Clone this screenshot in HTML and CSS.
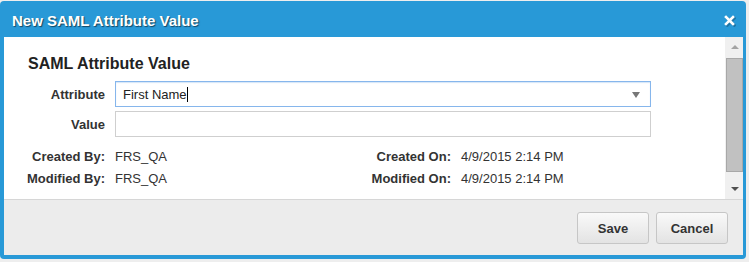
FILE: index.html
```html
<!DOCTYPE html>
<html>
<head>
<meta charset="utf-8">
<link rel="stylesheet" href="styles.css">
</head>
<body>
<div class="dialog">
  <div class="titlebar">
    <span class="title">New SAML Attribute Value</span>
    <span class="close" aria-label="Close">
      <svg width="12" height="12" viewBox="0 0 12 12">
        <path d="M2.5 2.5 L9.5 9.5 M9.5 2.5 L2.5 9.5" stroke="#1a5f88" stroke-width="3" stroke-linecap="square" transform="translate(0.8 0.8)" opacity="0.6"/>
        <path d="M2 2 L9 9 M9 2 L2 9" stroke="#fff" stroke-width="2.6" stroke-linecap="square"/>
      </svg>
    </span>
  </div>
  <div class="panel">
    <div class="body">
      <div class="content">
        <h2 class="heading">SAML Attribute Value</h2>
        <div class="form">
          <label class="label">Attribute</label>
          <div class="input select">
            <span class="text">First Name</span><span class="caret"></span>
            <span class="arrow"></span>
          </div>
          <label class="label">Value</label>
          <div class="input"></div>
        </div>
        <div class="meta">
          <span class="mlabel">Created By:</span>
          <span class="mvalue">FRS_QA</span>
          <span class="mlabel">Created On:</span>
          <span class="mvalue">4/9/2015 2:14 PM</span>
          <span class="mlabel">Modified By:</span>
          <span class="mvalue">FRS_QA</span>
          <span class="mlabel">Modified On:</span>
          <span class="mvalue">4/9/2015 2:14 PM</span>
        </div>
      </div>
      <div class="scrollbar">
        <div class="sb-btn"><span class="sb-up"></span></div>
        <div class="sb-track"><div class="sb-thumb"></div></div>
        <div class="sb-btn"><span class="sb-down"></span></div>
      </div>
    </div>
    <div class="footer">
      <button class="btn">Save</button>
      <button class="btn">Cancel</button>
    </div>
  </div>
</div>
</body>
</html>
```

FILE: styles.css
```css
* { box-sizing: border-box; }
html, body { margin: 0; padding: 0; }
body {
  background: #eeeeee;
  padding-top: 1px;
  font-family: "Liberation Sans", Arial, sans-serif;
  color: #333;
}
.dialog {
  width: 746px;
  height: 258px;
  background: #2899d7;
  border-radius: 4px;
  padding: 0 3px 4px 4px;
  display: flex;
  flex-direction: column;
}
.titlebar {
  height: 36px;
  flex: none;
  display: flex;
  align-items: flex-start;
  justify-content: space-between;
  padding: 10px 7px 0 8px;
}
.title {
  color: #fff;
  font-weight: bold;
  font-size: 15px;
  line-height: 20px;
  text-shadow: 1px 1px 1px rgba(0,0,0,0.55);
}
.close {
  display: flex;
  margin-top: 4px;
}
.panel {
  flex: 1;
  display: flex;
  flex-direction: column;
  background: #fff;
}
.body {
  height: 162px;
  display: flex;
}
.content {
  flex: 1;
  padding: 17px 0 0 22px;
}
.heading {
  margin: 0 0 0 2px;
  font-size: 16px;
  line-height: 20px;
  font-weight: bold;
  color: #222;
}
.form {
  margin-top: 7px;
  display: grid;
  grid-template-columns: 79px 536px;
  column-gap: 10px;
  row-gap: 4px;
  align-items: center;
}
.label, .mlabel {
  text-align: right;
  font-weight: bold;
  font-size: 13px;
  color: #333;
  white-space: nowrap;
}
.input {
  height: 26px;
  border: 1px solid #cfcfcf;
  background: #fff;
  display: flex;
  align-items: center;
  padding-left: 7px;
  font-size: 13px;
  color: #222;
}
.select {
  border-color: #86b6ec;
  box-shadow: inset 0 1px 1px rgba(134,182,236,0.35);
  position: relative;
}
.caret {
  display: inline-block;
  width: 1px;
  height: 15px;
  background: #000;
}
.arrow {
  position: absolute;
  right: 10px;
  top: 10px;
  width: 0;
  height: 0;
  border-left: 4.5px solid transparent;
  border-right: 4.5px solid transparent;
  border-top: 6px solid #777;
}
.meta {
  margin-top: 9px;
  display: grid;
  grid-template-columns: 79px 246px 80px auto;
  column-gap: 10px;
  row-gap: 1px;
  line-height: 21px;
  align-items: baseline;
}
.mvalue {
  font-size: 13px;
  color: #333;
  white-space: nowrap;
}
.scrollbar {
  width: 18px;
  flex: none;
  background: #f0f0f0;
  display: flex;
  flex-direction: column;
  padding-left: 1px;
}
.sb-btn {
  height: 20px;
  flex: none;
  display: flex;
  align-items: center;
  justify-content: center;
}
.sb-up, .sb-down {
  width: 0;
  height: 0;
  border-left: 4px solid transparent;
  border-right: 4px solid transparent;
}
.sb-up { border-bottom: 4px solid #a3a3a3; }
.sb-down { border-top: 4px solid #505050; }
.sb-track {
  flex: 1;
  padding-top: 1px;
}
.sb-thumb {
  height: 114px;
  background: #c1c1c1;
  border: 1px solid #a8a8a8;
}
.footer {
  flex: 1;
  background: #ececec;
  border-top: 1px solid #d6d6d6;
  display: flex;
  justify-content: flex-end;
  align-items: flex-start;
  gap: 7px;
  padding: 12px 15px 0 0;
}
.btn {
  width: 72px;
  height: 32px;
  border: 1px solid #c6c6c6;
  border-radius: 3px;
  background: linear-gradient(#f9f9f9, #e3e3e3);
  font-family: "Liberation Sans", Arial, sans-serif;
  font-weight: bold;
  font-size: 13px;
  color: #333;
  padding: 0;
}
```
